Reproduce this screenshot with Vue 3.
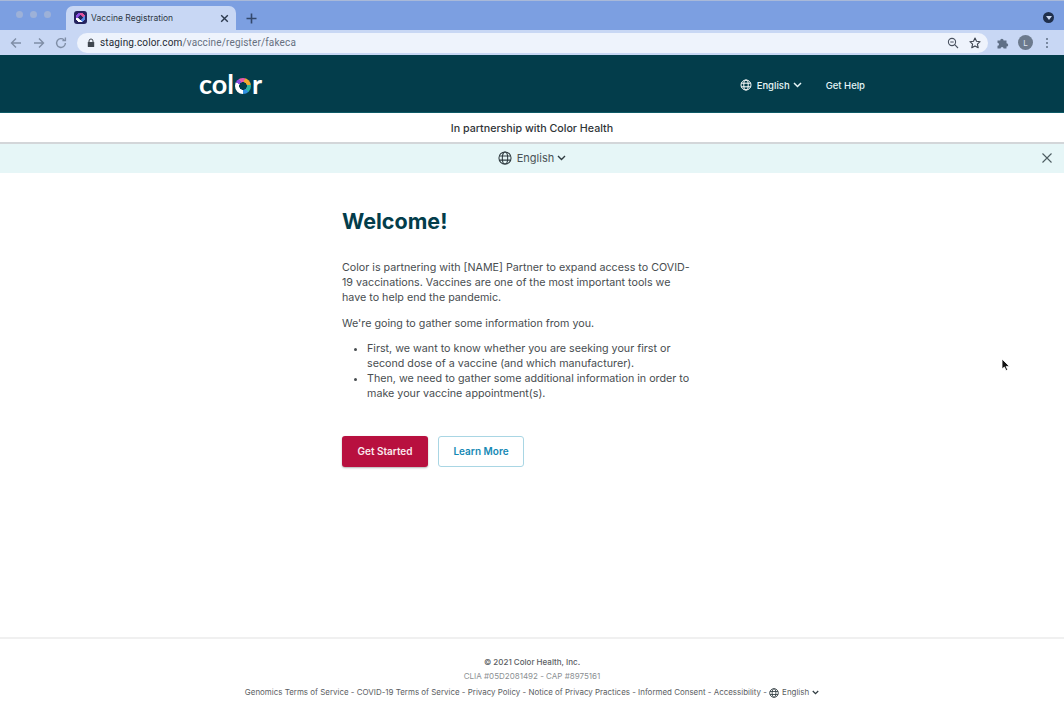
<script setup>
const footerLinks = [
  'Genomics Terms of Service',
  'COVID-19 Terms of Service',
  'Privacy Policy',
  'Notice of Privacy Practices',
  'Informed Consent',
  'Accessibility',
]
</script>

<template>
  <div class="window">
    <div class="tabstrip">
      <div class="lights"><i></i><i></i><i></i></div>
      <div class="tab">
        <span class="favicon"></span>
        <span class="tab-title">Vaccine Registration</span>
        <svg class="tab-close" width="9" height="9" viewBox="0 0 9 9"><path d="M1.2 1.2l6.6 6.6M7.8 1.2L1.2 7.8" stroke="#2c3a4e" stroke-width="1.4" /></svg>
      </div>
      <svg class="tab-new" width="11" height="11" viewBox="0 0 11 11"><path d="M5.5 0.5v10M0.5 5.5h10" stroke="#33486c" stroke-width="1.6" /></svg>
      <span class="strip-menu">
        <svg width="6" height="4" viewBox="0 0 6 4"><path d="M0 0h6L3 4z" fill="#c9d6ee" /></svg>
      </span>
    </div>

    <div class="toolbar">
      <svg class="nav" width="14" height="14" viewBox="0 0 14 14"><path d="M12 7H2.5M7 2.5L2.5 7 7 11.5" fill="none" stroke="#7f8ea6" stroke-width="1.4" /></svg>
      <svg class="nav" width="14" height="14" viewBox="0 0 14 14"><path d="M2 7h9.5M7 2.5L11.5 7 7 11.5" fill="none" stroke="#7f8ea6" stroke-width="1.4" /></svg>
      <svg class="nav reload" width="14" height="14" viewBox="0 0 14 14"><path d="M11.4 7a4.4 4.4 0 1 1-1.3-3.1M11.4 1.6v3h-3" fill="none" stroke="#7f8ea6" stroke-width="1.4" /></svg>
      <div class="omnibox">
        <svg width="8" height="10" viewBox="0 0 8 10"><path d="M2 4V3a2 2 0 0 1 4 0v1" fill="none" stroke="#40464f" stroke-width="1" /><rect x="0.8" y="4" width="6.4" height="5" rx="0.6" fill="#40464f" /></svg>
        <span class="url"><b>staging.color.com</b>/vaccine/register/fakeca</span>
        <svg class="zoom-ic" width="12" height="12" viewBox="0 0 12 12"><circle cx="5" cy="5" r="3.6" fill="none" stroke="#4a5260" stroke-width="1.1" /><path d="M7.7 7.7L11 11M3.3 5h3.4" stroke="#4a5260" stroke-width="1.1" /></svg>
        <svg class="star-ic" width="12" height="12" viewBox="0 0 12 12"><path d="M6 1l1.5 3.3 3.6.4-2.7 2.4.8 3.6L6 8.9l-3.2 1.8.8-3.6L.9 4.7l3.6-.4z" fill="none" stroke="#3c434f" stroke-width="1.1" stroke-linejoin="round" /></svg>
      </div>
      <svg class="puzzle" width="12" height="12" viewBox="0 0 12 12"><path d="M0.5 3.5h2.7a1.7 1.7 0 1 1 3.4 0h2.9v2.7a1.7 1.7 0 1 1 0 3.4V11.5H6.6a1.5 1.5 0 0 0-3 0H0.5V8.8a1.5 1.5 0 0 0 0-3z" fill="#5f6f86" /></svg>
      <span class="avatar">L</span>
      <span class="kebab"><i></i><i></i><i></i></span>
    </div>

    <header class="site-header">
      <div class="logo">
        <span>col</span><span class="logo-ring"></span><span>r</span>
      </div>
      <nav class="site-nav">
        <span class="nav-lang">
          <svg class="globe" width="12" height="12" viewBox="0 0 12 12"><g fill="none" stroke="#fff" stroke-width="1"><circle cx="6" cy="6" r="5" /><ellipse cx="6" cy="6" rx="2.2" ry="5" /><path d="M1.3 4.2h9.4M1.3 7.8h9.4" /></g></svg>
          <span>English</span>
          <svg class="nav-chev" width="9" height="6" viewBox="0 0 9 6"><path d="M1 1l3.5 3.5L8 1" fill="none" stroke="#e6f6f7" stroke-width="1.5" /></svg>
        </span>
        <span>Get Help</span>
      </nav>
    </header>

    <div class="partner">In partnership with Color Health</div>

    <div class="lang-bar">
      <svg width="14" height="14" viewBox="0 0 12 12"><g fill="none" stroke="#2f3b40" stroke-width="0.9"><circle cx="6" cy="6" r="5.2" /><ellipse cx="6" cy="6" rx="2.3" ry="5.2" /><path d="M1.2 4.2h9.6M1.2 7.8h9.6" /></g></svg>
      <span>English</span>
      <svg class="bar-chev" width="9" height="6" viewBox="0 0 9 6"><path d="M1 1l3.5 3.5L8 1" fill="none" stroke="#2f3b40" stroke-width="1.4" /></svg>
      <svg class="bar-close" width="10" height="10" viewBox="0 0 10 10"><path d="M.5.5l9 9M9.5.5l-9 9" stroke="#4d5c61" stroke-width="1.1" /></svg>
    </div>

    <main class="content">
      <h1>Welcome!</h1>
      <p>Color is partnering with [NAME] Partner to expand access to COVID-<br />19 vaccinations. Vaccines are one of the most important tools we<br />have to help end the pandemic.</p>
      <p>We're going to gather some information from you.</p>
      <ul>
        <li>First, we want to know whether you are seeking your first or second dose of a vaccine (and which manufacturer).</li>
        <li>Then, we need to gather some additional information in order to make your vaccine appointment(s).</li>
      </ul>
      <div class="actions">
        <button class="btn-primary">Get Started</button>
        <button class="btn-secondary">Learn More</button>
      </div>
    </main>

    <footer class="site-footer">
      <div class="copyright">© 2021 Color Health, Inc.</div>
      <div class="clia">CLIA #05D2081492 - CAP #8975161</div>
      <div class="links">
        <template v-for="link in footerLinks" :key="link">
          <span>{{ link }}</span><span> - </span>
        </template>
        <svg class="foot-globe" width="10" height="10" viewBox="0 0 12 12"><g fill="none" stroke="#2f3b40" stroke-width="1"><circle cx="6" cy="6" r="5.2" /><ellipse cx="6" cy="6" rx="2.3" ry="5.2" /><path d="M1.2 4.2h9.6M1.2 7.8h9.6" /></g></svg>
        <span>English</span>
        <svg class="foot-chev" width="7" height="5" viewBox="0 0 9 6"><path d="M1 1l3.5 3.5L8 1" fill="none" stroke="#2f3b40" stroke-width="1.6" /></svg>
      </div>
    </footer>

    <svg class="cursor" width="10" height="14" viewBox="0 0 10 14"><path d="M1 1v10l2.4-2 1.6 3.6 1.7-.8-1.6-3.4H8.4z" fill="#111" stroke="#fff" stroke-width="0.8" /></svg>
  </div>
</template>

<style scoped>
.window {
  position: relative;
  width: 1064px;
  height: 720px;
  overflow: hidden;
  display: flex;
  flex-direction: column;
  background: #fff;
  font-family: Inter, "Open Sans", sans-serif;
  color: #484d50;
}

.tabstrip {
  height: 30px;
  flex-shrink: 0;
  display: flex;
  align-items: flex-end;
  background: #7c9fe1;
  border-top: 1px solid #a9b9d8;
  box-sizing: border-box;
}

.lights {
  display: flex;
  gap: 7px;
  width: 66px;
  padding: 0 0 0 16px;
  box-sizing: border-box;
  align-self: flex-start;
  margin-top: 10px;
}

.lights i {
  width: 7px;
  height: 7px;
  border-radius: 50%;
  background: #9db1d8;
}

.tab {
  width: 170px;
  height: 24px;
  display: flex;
  align-items: center;
  padding: 0 7px 1px 8px;
  box-sizing: border-box;
  background: #c8d7f4;
  border-radius: 7px 7px 0 0;
}

.favicon {
  width: 13px;
  height: 13px;
  border-radius: 3px;
  margin-right: 4px;
  background:
    radial-gradient(circle, #23235f 0 2px, transparent 2.3px),
    radial-gradient(circle, transparent 0 4.6px, #23235f 4.9px),
    conic-gradient(#e0529b 0 20%, #5a8be6 20% 45%, #fff 45% 75%, #8b4fe0 75%);
}

.tab-title {
  flex: 1;
  font-size: 8.5px;
  color: #2e3744;
}

.tab-close {
  margin-top: 1px;
}

.tab-new {
  margin: 0 0 6px 10px;
}

.strip-menu {
  margin: 0 10px 7px auto;
  width: 11px;
  height: 11px;
  border-radius: 50%;
  background: #1f2f4c;
  display: flex;
  align-items: center;
  justify-content: center;
}

.toolbar {
  height: 25px;
  flex-shrink: 0;
  display: flex;
  align-items: center;
  background: #c8d7f4;
  padding-left: 9px;
  box-sizing: border-box;
}

.nav {
  margin-right: 9px;
}

.nav.reload {
  margin-left: -1px;
  margin-right: 9px;
}

.omnibox {
  width: 911px;
  height: 20px;
  display: flex;
  align-items: center;
  padding: 0 7px 0 10px;
  box-sizing: border-box;
  background: #eef3fc;
  border-radius: 10px;
}

.url {
  margin-left: 5px;
  flex: 1;
  font-size: 10px;
  color: #667080;
  font-family: Roboto, sans-serif;
  letter-spacing: 0.15px;
}

.url b {
  font-weight: 400;
  color: #252b35;
}

.star-ic {
  margin-left: 10px;
}

.puzzle {
  margin-left: 9px;
}

.avatar {
  width: 15px;
  height: 15px;
  margin-left: 9px;
  border-radius: 50%;
  background: #6c7a8d;
  color: #dfe7f5;
  font-size: 8px;
  display: flex;
  align-items: center;
  justify-content: center;
}

.kebab {
  margin-left: 13px;
  display: flex;
  flex-direction: column;
  gap: 2px;
}

.kebab i {
  width: 2px;
  height: 2px;
  border-radius: 50%;
  background: #5f6f86;
}

.site-header {
  height: 58px;
  flex-shrink: 0;
  display: flex;
  align-items: center;
  justify-content: space-between;
  padding: 0 199px;
  box-sizing: border-box;
  background: #033d4b;
  border-bottom: 1px solid #0d5a66;
}

.logo {
  display: flex;
  align-items: center;
  gap: 1px;
  color: #fff;
  font-family: Lato, sans-serif;
  font-size: 27px;
  font-weight: 700;
  line-height: 30px;
}

.logo-ring {
  width: 16px;
  height: 16px;
  margin-top: 5px;
  border-radius: 50%;
  background:
    radial-gradient(circle, #033d4b 0 3.6px, transparent 4px),
    conic-gradient(#e85aa8 0 4%, #f0a92e 4% 22%, #2fb5a0 22% 38%, #2f8fe0 38% 50%, #fff 50% 82%, #8b4fe0 82% 92%, #e85aa8 92%);
}

.site-nav {
  display: flex;
  align-items: center;
  gap: 24px;
  margin-top: 3px;
  font-size: 9.5px;
  font-weight: 500;
  color: #e6f6f7;
}

.nav-lang {
  display: flex;
  align-items: center;
  gap: 5px;
}

.nav-chev {
  margin-left: -2px;
}

.partner {
  height: 31px;
  flex-shrink: 0;
  display: flex;
  align-items: center;
  justify-content: center;
  padding-top: 1px;
  box-sizing: border-box;
  border-bottom: 2px solid #d3d6d9;
  font-size: 10.7px;
  font-weight: 500;
  color: #2f3437;
}

.lang-bar {
  position: relative;
  height: 29px;
  flex-shrink: 0;
  display: flex;
  align-items: center;
  justify-content: center;
  gap: 5px;
  padding-bottom: 2px;
  box-sizing: border-box;
  background: #e6f6f7;
  font-size: 11px;
  color: #4a5356;
}

.bar-chev {
  margin-left: -2px;
}

.bar-close {
  position: absolute;
  right: 12px;
  top: 9px;
}

.content {
  flex: 1;
  padding: 35px 0 0 342px;
  box-sizing: border-box;
  font-size: 10.72px;
  line-height: 15px;
}

h1 {
  margin: 0 0 26px;
  font-size: 21.5px;
  line-height: 26px;
  font-weight: 700;
  color: #033d4b;
}

p {
  margin: 0 0 11px;
  width: 360px;
}

ul {
  margin: -1px 0 0;
  padding: 0 0 0 25px;
  width: 330px;
}

.actions {
  display: flex;
  gap: 10px;
  margin-top: 35px;
}

button {
  width: 86px;
  height: 31px;
  padding: 0 0 1px;
  font-family: inherit;
  font-size: 10px;
  font-weight: 600;
  border-radius: 3px;
  box-sizing: border-box;
}

.btn-primary {
  background: #b8103f;
  border: none;
  color: #fbe9ee;
  box-shadow: 0 1px 2px rgba(0, 0, 0, 0.3);
}

.btn-secondary {
  background: #fff;
  border: 1px solid #a9d6e4;
  color: #1689b4;
}

.site-footer {
  height: 83px;
  flex-shrink: 0;
  padding-top: 17px;
  box-sizing: border-box;
  border-top: 2px solid #f0f0f0;
  text-align: center;
  font-size: 8px;
  line-height: 13px;
  color: #5b6063;
}

.copyright {
  font-weight: 500;
}

.clia {
  color: #8b9093;
  line-height: 14px;
}

.links {
  margin-top: 3px;
  display: flex;
  justify-content: center;
  align-items: center;
  white-space: pre;
  font-size: 7.95px;
}

.foot-globe {
  margin-right: 3px;
}

.foot-chev {
  margin-left: 3px;
}

.cursor {
  position: absolute;
  left: 1001px;
  top: 358px;
}
</style>
